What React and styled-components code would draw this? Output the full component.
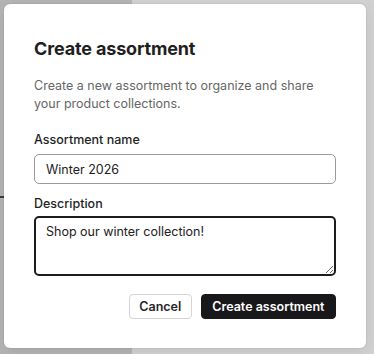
import React, { useEffect, useRef, useState } from "react";
import styled, { createGlobalStyle } from "styled-components";

const GlobalStyle = createGlobalStyle`
  html, body {
    margin: 0;
    padding: 0;
    height: 100%;
  }
  body {
    font-family: Inter, "Noto Sans", "Liberation Sans", sans-serif;
    background: #d1d1d1;
    overflow: hidden;
  }
`;

const Page = styled.div`
  position: relative;
  width: 374px;
  height: 354px;
  display: grid;
  grid-template-columns: 132px 1fr;
`;

const Sidebar = styled.div`
  background: #b4b4b4;
  position: relative;

  &::after {
    content: "";
    position: absolute;
    left: 0;
    top: 196px;
    width: 8px;
    height: 2px;
    background: #3a3a3a;
  }
`;

const Main = styled.div`
  background: #d1d1d1;
`;

const Dialog = styled.div`
  position: absolute;
  top: 4px;
  left: 4px;
  width: 362px;
  height: 344px;
  box-sizing: border-box;
  padding: 33px 30px 0;
  background: #fff;
  border-radius: 6px;
  box-shadow: 0 0 0 1px rgba(0, 0, 0, 0.04), 0 4px 14px rgba(0, 0, 0, 0.08);
  display: flex;
  flex-direction: column;
`;

const Title = styled.h2`
  margin: 0;
  font-size: 18px;
  font-weight: 700;
  line-height: 24px;
  color: #1f1f1f;
  letter-spacing: -0.15px;
`;

const Lead = styled.p`
  margin: 16px 0 0;
  font-size: 12.5px;
  line-height: 18px;
  color: #666;
`;

const Field = styled.label`
  display: flex;
  flex-direction: column;
  gap: ${({ $gap }) => $gap}px;
  margin-top: ${({ $top }) => $top}px;
`;

const Label = styled.span`
  font-size: 12.5px;
  font-weight: 500;
  line-height: 18px;
  color: #1f1f1f;
`;

const Input = styled.input`
  box-sizing: border-box;
  width: 100%;
  height: 30px;
  padding: 0 11px;
  border: 1px solid #9a9a9f;
  border-radius: 5px;
  font: inherit;
  font-size: 12.5px;
  color: #222;
  outline: none;
`;

const TextArea = styled.textarea`
  display: block;
  box-sizing: border-box;
  width: 100%;
  height: 60px;
  padding: 5px 10px;
  border: 2px solid #1c1c1c;
  border-radius: 5px;
  font: inherit;
  font-size: 12.5px;
  line-height: 18px;
  color: #222;
  outline: none;
  resize: vertical;
`;

const Actions = styled.div`
  display: flex;
  justify-content: flex-end;
  gap: 9px;
  margin-top: 18px;
`;

const Button = styled.button`
  height: 25px;
  padding: 0 ${({ $primary }) => ($primary ? 10.5 : 9.5)}px;
  border-radius: 4px;
  font: inherit;
  font-size: 12.5px;
  font-weight: 600;
  cursor: pointer;
  border: 1px solid ${({ $primary }) => ($primary ? "#18181b" : "#d4d4d8")};
  background: ${({ $primary }) => ($primary ? "#18181b" : "#fff")};
  color: ${({ $primary }) => ($primary ? "#fff" : "#27272a")};
`;

export default function App() {
  const [name, setName] = useState("Winter 2026");
  const [desc, setDesc] = useState("Shop our winter collection!");
  const areaRef = useRef(null);

  useEffect(() => {
    const el = areaRef.current;
    if (el) {
      el.focus();
      el.setSelectionRange(el.value.length, el.value.length);
    }
  }, []);

  return (
    <>
      <GlobalStyle />
      <Page>
        <Sidebar />
        <Main />
        <Dialog role="dialog">
          <Title>Create assortment</Title>
          <Lead>
            Create a new assortment to organize and share your product
            collections.
          </Lead>
          <Field $top={18} $gap={5}>
            <Label>Assortment name</Label>
            <Input value={name} onChange={(e) => setName(e.target.value)} />
          </Field>
          <Field $top={11} $gap={3}>
            <Label>Description</Label>
            <TextArea
              ref={areaRef}
              value={desc}
              onChange={(e) => setDesc(e.target.value)}
            />
          </Field>
          <Actions>
            <Button>Cancel</Button>
            <Button $primary>Create assortment</Button>
          </Actions>
        </Dialog>
      </Page>
    </>
  );
}
